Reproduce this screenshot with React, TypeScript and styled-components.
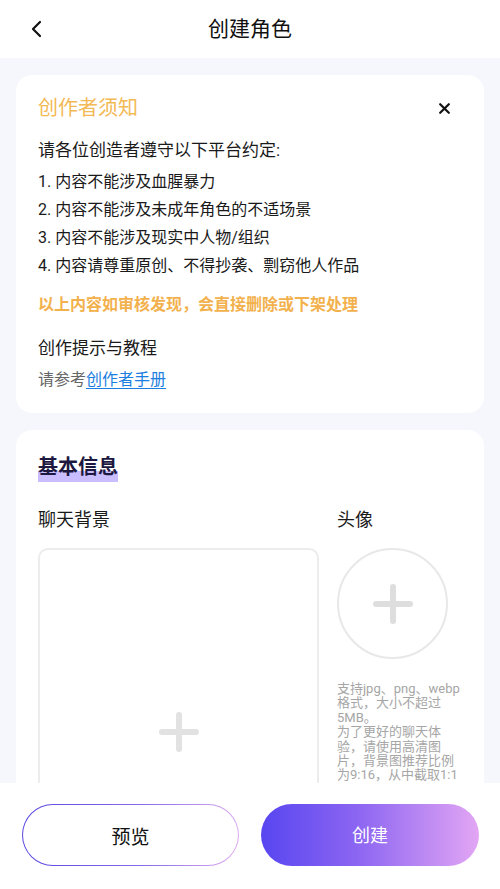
import React from "react";
import styled, { createGlobalStyle } from "styled-components";

const Global = createGlobalStyle`
  html, body { margin: 0; padding: 0; background: #ffffff; }
  body { font-family: Roboto, "Noto Sans CJK SC", "Noto Sans", sans-serif; color: #111; }
  * { box-sizing: border-box; }
`;

const Page = styled.div`
  width: 500px;
  height: 889px;
  display: flex;
  flex-direction: column;
  overflow: hidden;
  background: #f5f7fc;
`;

const Header = styled.header`
  height: 58px;
  flex: none;
  background: #fff;
  display: grid;
  grid-template-columns: 60px 1fr 60px;
  align-items: center;
`;

const BackButton = styled.button`
  border: 0;
  background: none;
  padding: 0 0 0 30px;
  height: 58px;
  display: flex;
  align-items: center;
  cursor: pointer;
`;

const Title = styled.h1`
  margin: 0;
  font-size: 21px;
  font-weight: 400;
  text-align: center;
  color: #111;
  line-height: 58px;
`;

const Content = styled.main`
  flex: 1;
  min-height: 0;
  overflow: hidden;
  padding: 17px 16px 0;
  display: flex;
  flex-direction: column;
  gap: 17px;
`;

const Card = styled.section<{ $pad: string }>`
  background: #fff;
  border-radius: 16px;
  padding: ${(p) => p.$pad};
  flex: none;
`;

const NoticeHead = styled.div`
  display: flex;
  align-items: center;
  justify-content: space-between;
`;

const NoticeTitle = styled.h2`
  margin: 0;
  font-size: 20px;
  line-height: 26px;
  font-weight: 400;
  color: #f3b955;
`;

const CloseButton = styled.button`
  border: 0;
  background: none;
  padding: 0;
  margin-right: 10px;
  width: 16px;
  height: 16px;
  display: flex;
  align-items: center;
  justify-content: center;
  cursor: pointer;
`;

const Intro = styled.p`
  margin: 15px 0 0;
  font-size: 17px;
  line-height: 28px;
  color: #1a1a1a;
`;

const Rules = styled.ol`
  margin: 4px 0 0;
  padding: 0;
  list-style: none;
`;

const Rule = styled.li`
  font-size: 16px;
  line-height: 28px;
  color: #1a1a1a;
`;

const Warning = styled.p`
  margin: 13px 0 0;
  font-size: 16px;
  line-height: 24px;
  font-weight: 700;
  color: #f2b14d;
`;

const SubTitle = styled.h3`
  margin: 18px 0 0;
  font-size: 17px;
  line-height: 26px;
  font-weight: 400;
  color: #1a1a1a;
`;

const Ref = styled.p`
  margin: 7px 0 0;
  font-size: 16px;
  line-height: 24px;
  color: #666;
`;

const Link = styled.a`
  color: #1c7fe0;
  text-decoration: underline;
  text-underline-offset: 3px;
`;

const SectionTitle = styled.h2`
  margin: 0;
  font-size: 20px;
  line-height: 26px;
  font-weight: 700;
  color: #1d1840;
`;

const Mark = styled.span`
  display: inline-block;
  padding-bottom: 2px;
  background: linear-gradient(to bottom, transparent 62%, #c9bcff 62%);
`;

const UploadRow = styled.div`
  margin-top: 25px;
  display: grid;
  grid-template-columns: 281px 127px;
  column-gap: 18px;
`;

const Column = styled.div`
  display: flex;
  flex-direction: column;
`;

const Label = styled.div`
  font-size: 18px;
  line-height: 26px;
  color: #1a1a1a;
`;

const BgBox = styled.div`
  margin-top: 15px;
  height: 368px;
  border: 2px solid #ececec;
  border-radius: 10px;
  display: flex;
  align-items: center;
  justify-content: center;
`;

const AvatarBox = styled.div`
  margin-top: 15px;
  width: 111px;
  height: 111px;
  border-radius: 50%;
  border: 2px solid #e8e8e8;
  display: flex;
  align-items: center;
  justify-content: center;
`;

const Hint = styled.p`
  margin: 23px 0 0;
  font-size: 13px;
  line-height: 14.4px;
  color: #a6a6a6;
  overflow-wrap: normal;
`;

const Footer = styled.footer`
  height: 106px;
  flex: none;
  background: #fff;
  padding: 21px 21px 0 22px;
  display: grid;
  grid-template-columns: 217px 218px;
  column-gap: 22px;
  align-items: start;
`;

const PreviewButton = styled.button`
  height: 62px;
  border-radius: 31px;
  border: 1.5px solid transparent;
  background:
    linear-gradient(#fff, #fff) padding-box,
    linear-gradient(to right, #5646e2, #8a6ae8 55%, #dcaaf0) border-box;
  font-family: inherit;
  font-size: 19px;
  color: #111;
  cursor: pointer;
`;

const CreateButton = styled.button`
  height: 62px;
  border-radius: 31px;
  border: 0;
  background: linear-gradient(to right, #5846f0, #8d66f2 45%, #e3a6f4);
  font-family: inherit;
  font-size: 18px;
  color: #fff;
  padding-bottom: 4px;
  cursor: pointer;
`;

const Plus = ({ size, color }: { size: number; color: string }) => (
  <svg width={size} height={size} viewBox="0 0 40 40" fill="none">
    <path d="M20 3v34M3 20h34" stroke={color} strokeWidth="6" strokeLinecap="round" />
  </svg>
);

export default function App() {
  const rules = [
    "1. 内容不能涉及血腥暴力",
    "2. 内容不能涉及未成年角色的不适场景",
    "3. 内容不能涉及现实中人物/组织",
    "4. 内容请尊重原创、不得抄袭、剽窃他人作品",
  ];
  return (
    <>
      <Global />
      <Page>
        <Header>
          <BackButton aria-label="返回">
            <svg width="12" height="18" viewBox="0 0 12 18" fill="none">
              <path d="M10 2L3 9l7 7" stroke="#111" strokeWidth="2.2" strokeLinecap="round" strokeLinejoin="round" />
            </svg>
          </BackButton>
          <Title>创建角色</Title>
          <span />
        </Header>
        <Content>
          <Card $pad="20px 22px 21px">
            <NoticeHead>
              <NoticeTitle>创作者须知</NoticeTitle>
              <CloseButton aria-label="关闭">
                <svg width="11" height="11" viewBox="0 0 11 11" fill="none">
                  <path d="M1.2 1.2l8.6 8.6M9.8 1.2l-8.6 8.6" stroke="#111" strokeWidth="2.2" strokeLinecap="round" />
                </svg>
              </CloseButton>
            </NoticeHead>
            <Intro>请各位创造者遵守以下平台约定:</Intro>
            <Rules>
              {rules.map((r) => (
                <Rule key={r}>{r}</Rule>
              ))}
            </Rules>
            <Warning>以上内容如审核发现，会直接删除或下架处理</Warning>
            <SubTitle>创作提示与教程</SubTitle>
            <Ref>
              请参考<Link href="#">创作者手册</Link>
            </Ref>
          </Card>
          <Card $pad="24px 20px 0 22px">
            <SectionTitle>
              <Mark>基本信息</Mark>
            </SectionTitle>
            <UploadRow>
              <Column>
                <Label>聊天背景</Label>
                <BgBox>
                  <Plus size={40} color="#e2e2e2" />
                </BgBox>
              </Column>
              <Column>
                <Label>头像</Label>
                <AvatarBox>
                  <Plus size={40} color="#dedede" />
                </AvatarBox>
                <Hint>
                  支持jpg、png、webp 格式，大小不超过5MB。
                  <br />
                  为了更好的聊天体验，请使用高清图片，背景图推荐比例为9:16，从中截取1:1作为头像
                </Hint>
              </Column>
            </UploadRow>
          </Card>
        </Content>
        <Footer>
          <PreviewButton>预览</PreviewButton>
          <CreateButton>创建</CreateButton>
        </Footer>
      </Page>
    </>
  );
}
